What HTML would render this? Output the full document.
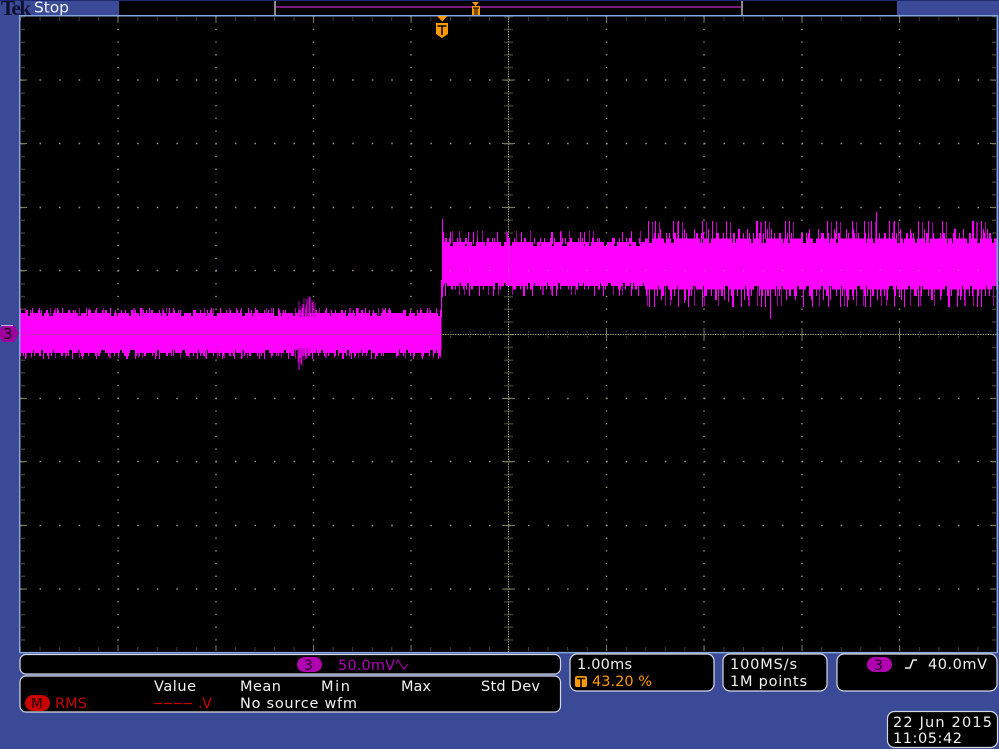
<!DOCTYPE html>
<html>
<head>
<meta charset="utf-8">
<style>
html,body{margin:0;padding:0;background:#3b4a96;width:999px;height:749px;overflow:hidden}
svg{display:block}
text{font-family:"DejaVu Sans","Liberation Sans",sans-serif;font-size:14.5px;fill:#f2f2f2}
.n{fill:none}
.a{stroke-dasharray:2 1 3 1 1 2 4 1 2 2 1 1 3 3 2 1 5 2 1 1 6 1 2 3 4 1 1 1 8 2 3 1 1 4 2 1 7 1}
.b{stroke-dasharray:1 3 1 5 2 2 1 7 1 2 1 4 2 6 1 3 1 9 2 3 1 1 1 12 3 4 1 6 1 2 2 8 1 5}
.c{stroke-dasharray:1 11 1 6 1 17 1 4 1 23 1 9 1 13 1 29 2 7 1 19 1 3 1 37 1 8 1 15}
.l{stroke-dasharray:7 3 12 2 5 4 9 1 15 3 6 2 21 4 3 1 11 2 8 5 17 1 4 2 13 3}
.m{stroke:#ff00ff}
.d{stroke:#a000a0}
.box{fill:#000;stroke:#d5d9e6;stroke-width:1.2}
</style>
</head>
<body>
<svg width="999" height="749" viewBox="0 0 999 749" xmlns="http://www.w3.org/2000/svg">
<rect width="999" height="749" fill="#3b4a96"/>
<rect width="999" height="1" fill="#1d2a70"/>
<rect x="119" y="1" width="778" height="14" fill="#000"/>
<rect x="274" y="1" width="2" height="14" fill="#8a8a8a"/>
<rect x="741" y="1" width="2" height="14" fill="#8a8a8a"/>
<rect x="276" y="6" width="465" height="2" fill="#7a1a7c"/>

<text x="1" y="15" textLength="30" style="font-family:'Liberation Serif',serif;font-size:21px;font-weight:bold;fill:#0e1030">Tek</text>
<text x="34" y="12.500" textLength="35" style="font-size:15.500px;fill:#eef0f8">Stop</text>

<!-- screen -->
<rect x="20" y="16" width="977" height="636" fill="#000"/>

<!-- grid -->
<g class="n" stroke="#9a9a72" stroke-width="1">
<path stroke-width="1.500" stroke-dasharray="1.300 11.420" d="M118 16V652M216 16V652M313.500 16V652M411 16V652M606.500 16V652M704 16V652M802 16V652M899.500 16V652"/>
<path stroke-width="1.500" stroke-dasharray="1.500 18.040" d="M20 80H997M20 143.500H997M20 207.500H997M20 270.500H997M20 398.500H997M20 461.500H997M20 525.500H997M20 589H997"/>
<path stroke="#9a9a70" stroke-dasharray="1.500 1" d="M20 334.500H997M508.500 16V652"/>
<path stroke="#77775a" stroke-dasharray="1 18.54" d="M20 18H997M20 20H997M20 650H997M20 648H997M20 332H997M20 337H997"/>
<path stroke="#77775a" stroke-dasharray="1.500 11.220" d="M22 16V652M24 16V652M995 16V652M993 16V652M505 16V652M507 16V652M510 16V652M512 16V652"/>
<path stroke="#77775a" d="M118 17V23M216 17V23M313.500 17V23M411 17V23M606.500 17V23M704 17V23M802 17V23M899.500 17V23M118 645V651M216 645V651M313.500 645V651M411 645V651M606.500 645V651M704 645V651M802 645V651M899.500 645V651M118 328V341M216 328V341M313.500 328V341M411 328V341M606.500 328V341M704 328V341M802 328V341M899.500 328V341M21 80H27M21 143.500H27M21 207.500H27M21 270.500H27M21 398.500H27M21 461.500H27M21 525.500H27M21 589H27M990 80H996M990 143.500H996M990 207.500H996M990 270.500H996M990 398.500H996M990 461.500H996M990 525.500H996M990 589H996M502 80H515M502 143.500H515M502 207.500H515M502 270.500H515M502 398.500H515M502 461.500H515M502 525.500H515M502 589H515"/>
</g>

<!-- waveform left -->
<g class="n">
<line class="c d" x1="20" x2="441" y1="313" y2="313" stroke-width="10" stroke-dashoffset="7"/>
<line class="c d" x1="20" x2="441" y1="353" y2="353" stroke-width="10" stroke-dashoffset="31"/>
<line class="c m" x1="20" x2="441" y1="313" y2="313" stroke-width="10"/>
<line class="b m" x1="20" x2="441" y1="313" y2="313" stroke-width="6" stroke-dashoffset="4"/>
<line class="l m" x1="20" x2="441" y1="315" y2="315" stroke-width="4"/>
<line class="c m" x1="20" x2="441" y1="353" y2="353" stroke-width="12" stroke-dashoffset="14"/>
<line class="b m" x1="20" x2="441" y1="353" y2="353" stroke-width="6" stroke-dashoffset="11"/>
<line class="l m" x1="20" x2="441" y1="351" y2="351" stroke-width="4" stroke-dashoffset="9"/>
<rect x="20" y="316" width="421.500" height="34" fill="#ff00ff" stroke="none"/>
<path stroke="#a000a0" d="M299 301V317M301 306V317M304 298V317M306 305V317M309 296V317M312 300V317M315 303V317M298 348V362M300 348V358M302 348V366M304 348V360M307 348V358M310 348V356"/>
<path stroke="#ff00ff" d="M303 304V317M307 299V317M310 297V317M313 302V317M299 348V370M301 348V364M303 348V356M306 348V359"/>
</g>

<!-- waveform right -->
<g class="n">
<line class="c d" x1="443" x2="645" y1="237" y2="237" stroke-width="12" stroke-dashoffset="3"/>
<line class="c d" x1="443" x2="645" y1="288" y2="288" stroke-width="14" stroke-dashoffset="21"/>
<line class="c m" x1="443" x2="645" y1="238" y2="238" stroke-width="12" stroke-dashoffset="12"/>
<line class="b m" x1="443" x2="645" y1="241" y2="241" stroke-width="6" stroke-dashoffset="8"/>
<line class="c m" x1="443" x2="645" y1="289" y2="289" stroke-width="14" stroke-dashoffset="40"/>
<line class="b m" x1="443" x2="645" y1="286" y2="286" stroke-width="7" stroke-dashoffset="2"/>
<line class="l m" x1="443" x2="645" y1="244" y2="244" stroke-width="4"/>
<line class="l m" x1="443" x2="645" y1="284" y2="284" stroke-width="4" stroke-dashoffset="6"/>

<line class="c d" x1="645" x2="997" y1="232" y2="232" stroke-width="20" stroke-dashoffset="5"/>
<line class="c d" x1="645" x2="997" y1="295" y2="295" stroke-width="22" stroke-dashoffset="17"/>
<line class="c m" x1="645" x2="997" y1="230" y2="230" stroke-width="18" stroke-dashoffset="9"/>
<line class="c m" x1="645" x2="997" y1="236" y2="236" stroke-width="14" stroke-dashoffset="27"/>
<line class="b m" x1="645" x2="997" y1="238" y2="238" stroke-width="10" stroke-dashoffset="1"/>
<line class="c m" x1="645" x2="997" y1="296" y2="296" stroke-width="22" stroke-dashoffset="33"/>
<line class="c m" x1="645" x2="997" y1="292" y2="292" stroke-width="16" stroke-dashoffset="50"/>
<line class="b m" x1="645" x2="997" y1="291" y2="291" stroke-width="10" stroke-dashoffset="13"/>
<line class="l m" x1="645" x2="997" y1="241" y2="241" stroke-width="5" stroke-dashoffset="3"/>
<line class="l m" x1="645" x2="997" y1="287" y2="287" stroke-width="5" stroke-dashoffset="10"/>
<rect x="442" y="246" width="555" height="37" fill="#ff00ff" stroke="none"/>
<rect x="645" y="243" width="352" height="43" fill="#ff00ff" stroke="none"/>
<path stroke="#ff00ff" d="M442.500 219V247M441.500 280V317M442.500 280V297M876.500 212V245M770.500 283V319M684.500 283V303M728.500 283V302"/>
</g>

<!-- grid over waveform -->
<g class="n" stroke="#c070a8" stroke-width="1">
<path stroke-dasharray="1 18.54" d="M20 270.500H997"/>
<path stroke="#b83eb8" stroke-dasharray="1 1" d="M20 334.500H441"/>
<path stroke="#d040d0" stroke-dasharray="1 1" d="M508.500 247V282"/>
</g>

<!-- borders -->
<path class="n" stroke="#86a6dc" stroke-width="1.500" d="M19.700 653V15.700H997.300V653M19.700 652.600H997.300"/>

<!-- channel marker -->
<path d="M0 329L3 325H14L19 333L14 342H3L0 338Z" fill="#a000a0"/>
<path d="M1 325.500H13" stroke="#c8b0d8" fill="none"/>
<text x="3" y="339" style="font-size:15px;fill:#160016">3</text>

<!-- T marker -->
<path d="M437 16H447.500L442.300 21.500Z" fill="#ff9a00"/>
<path d="M436 23H448V34L442 38L436 34Z" fill="#ff9a00"/>
<path d="M437.500 26H446.500M442 26V35" stroke="#000" stroke-width="1.500" fill="none"/>
<path d="M472 2H479L475.500 6Z" fill="#ff9a00"/>
<path d="M472 6H480V15H472Z" fill="#ff9a00"/>
<path d="M473 8H479M475 8V15M477 8V15" stroke="#000" stroke-width="1" fill="none"/>

<!-- bottom boxes -->
<rect class="box" x="20" y="654.500" width="540.500" height="19.500" rx="6"/>
<rect class="box" x="20" y="676" width="540.500" height="36" rx="6"/>
<rect class="box" x="570" y="654" width="144" height="37" rx="7"/>
<rect class="box" x="723" y="654" width="104" height="37" rx="7"/>
<rect class="box" x="837" y="654" width="160" height="37" rx="7"/>
<rect class="box" x="887.500" y="711.500" width="110" height="36" rx="7"/>

<rect x="297" y="657" width="25" height="15" rx="7.500" fill="#b000b0"/>
<text x="304" y="670" style="font-size:14px;fill:#1a001a">3</text>
<text x="338" y="670" textLength="57" style="fill:#b000b8">50.0mV</text>
<path d="M396 664L398 660L401 665L404 669L408 664" stroke="#b000b8" fill="none"/>

<text x="154" y="691" textLength="42">Value</text>
<text x="240" y="691" textLength="41">Mean</text>
<text x="321" y="691" textLength="29">Min</text>
<text x="401" y="691" textLength="30">Max</text>
<text x="481" y="691" textLength="59">Std Dev</text>
<rect x="25" y="695" width="25" height="16" rx="8" fill="#c80000"/>
<text x="31" y="708" style="font-size:13.500px;fill:#200000">M</text>
<text x="55" y="708" textLength="32" style="fill:#c80000">RMS</text>
<path d="M154 703.500H194" stroke="#c80000" stroke-width="1.300" stroke-dasharray="8 2" fill="none"/>
<text x="198" y="708" textLength="14" style="fill:#c80000">.V</text>
<text x="240" y="708" textLength="117">No source wfm</text>

<text x="577" y="669" textLength="55">1.00ms</text>
<rect x="575" y="676" width="12" height="11" rx="2" fill="#ff9a00"/>
<path d="M577 678.500H585M581 678.500V687" stroke="#000" stroke-width="1.500" fill="none"/>
<text x="592" y="686" textLength="60" style="fill:#ff9a00">43.20 %</text>

<text x="730" y="669" textLength="67">100MS/s</text>
<text x="730" y="686" textLength="77">1M points</text>

<rect x="867" y="657" width="25" height="15" rx="7.500" fill="#b000b0"/>
<text x="874" y="670" style="font-size:14px;fill:#1a001a">3</text>
<path d="M905 668H910L913 660H917" stroke="#f2f2f2" stroke-width="1.500" fill="none"/>
<text x="928" y="669" textLength="59">40.0mV</text>

<text x="893" y="727" textLength="99">22 Jun  2015</text>
<text x="893" y="743" textLength="69">11:05:42</text>
</svg>
</body>
</html>
